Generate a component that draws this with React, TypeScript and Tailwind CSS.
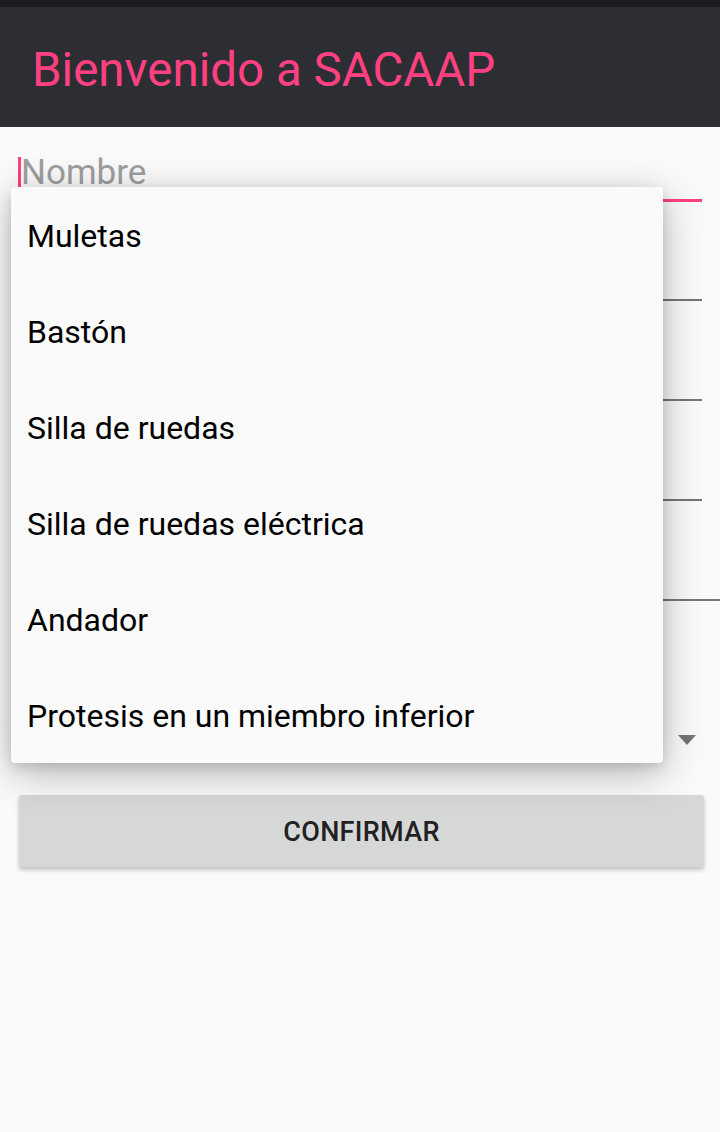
const options = [
  "Muletas",
  "Bastón",
  "Silla de ruedas",
  "Silla de ruedas eléctrica",
  "Andador",
  "Protesis en un miembro inferior",
];

export default function App() {
  return (
    <div
      className="relative w-[720px] h-[1132px] bg-[#fafafa] overflow-hidden"
      style={{ fontFamily: "Roboto, 'Noto Sans', sans-serif" }}
    >
      <div className="h-[7px] bg-[#1b1c20]" />
      <div className="h-[120px] bg-[#2d2e33] flex items-center px-[32px] pt-[8px]">
        <h1 className="text-[47.5px] text-[#ff4081] leading-none">Bienvenido a SACAAP</h1>
      </div>

      <div className="flex flex-col">
        <div className="ml-[18px] mr-[18px] h-[75px] flex flex-col justify-end">
          <div className="flex items-center h-[36px] mb-[9px]">
            <span className="w-[3px] h-[31px] bg-[#ff4081]" />
            <span className="text-[35px] text-[#9e9e9e] leading-none">Nombre</span>
          </div>
          <div className="h-[3px] bg-[#ff4081]" />
        </div>
        <div className="ml-[18px] mr-[18px] h-[99px] flex flex-col justify-end">
          <div className="h-[2px] bg-[#757575]" />
        </div>
        <div className="ml-[18px] mr-[18px] h-[100px] flex flex-col justify-end">
          <div className="h-[2px] bg-[#757575]" />
        </div>
        <div className="ml-[18px] mr-[18px] h-[100px] flex flex-col justify-end">
          <div className="h-[2px] bg-[#757575]" />
        </div>
        <div className="ml-[18px] h-[100px] flex flex-col justify-end">
          <div className="h-[2px] bg-[#757575]" />
        </div>
        <div className="h-[194px] flex flex-col justify-start pt-[134px] pr-[24px] items-end">
          <svg width="18" height="10" viewBox="0 0 18 10">
            <path d="M0 0 L18 0 L9 10 Z" fill="#757575" />
          </svg>
        </div>
        <div className="ml-[19px] w-[685px] h-[72px] bg-[#d6d7d7] rounded-[3px] flex items-center justify-center pt-[3px] shadow-[0_3px_4px_rgba(0,0,0,0.22)]">
          <span className="text-[27px] font-medium text-[#212121] tracking-[0.3px]">CONFIRMAR</span>
        </div>
      </div>

      <div className="absolute left-[11px] top-[187px] w-[652px] bg-[#fafafa] rounded-[4px] shadow-[0_10px_40px_rgba(0,0,0,0.28),0_4px_12px_rgba(0,0,0,0.12)]">
        {options.map((o) => (
          <div key={o} className="h-[96px] flex items-center pl-[16px] pt-[2px]">
            <span className="text-[32px] text-black leading-none">{o}</span>
          </div>
        ))}
      </div>
    </div>
  );
}
